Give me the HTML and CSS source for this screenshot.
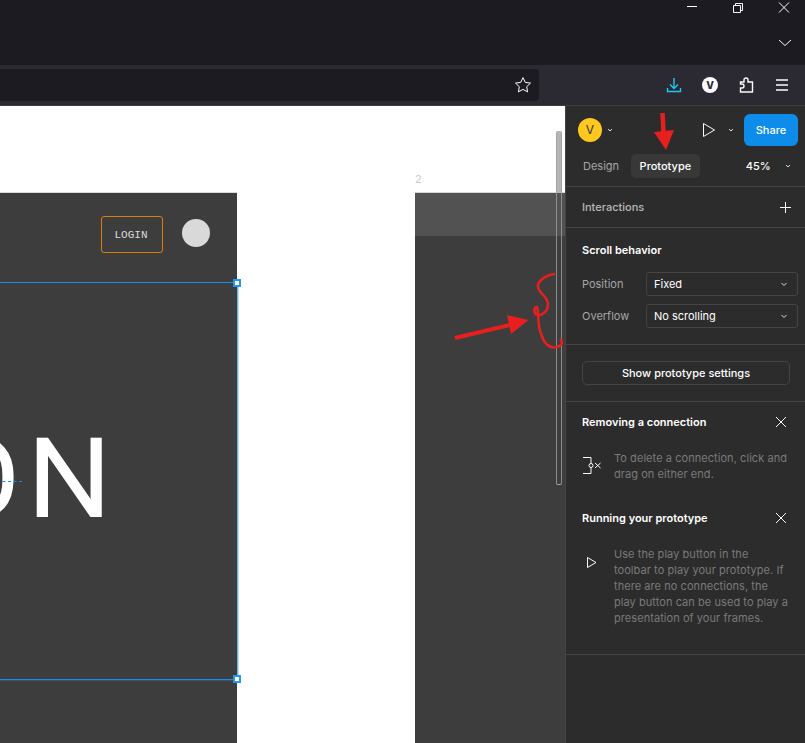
FILE: index.html
```html
<!DOCTYPE html>
<html lang="en">
<head>
    <meta charset="UTF-8">
    <title>Figma prototype panel</title>
    <link rel="stylesheet" href="styles.css">
</head>
<body>
    <div class="titlebar">
        <div class="window-buttons">
            <svg class="icon-win" viewBox="0 0 14 14"><path d="M1 4.500h10" /></svg>
            <svg class="icon-win" viewBox="0 0 14 14"><path d="M1.500 3.500h7v7h-7zM3.500 3.500v-2h7v7h-2" /></svg>
            <svg class="icon-win" viewBox="0 0 14 14"><path d="M1 .5l10 10M11 .5l-10 10" /></svg>
        </div>
        <svg class="tabs-chevron" viewBox="0 0 14 8"><path d="M1 1l6 5.500L13 1" /></svg>
    </div>

    <div class="toolbar">
        <div class="urlbar">
            <svg class="star" viewBox="0 0 18 18"><path d="M9 1.600l2.300 4.800 5.200.7-3.800 3.600.9 5.200L9 13.400l-4.600 2.500.9-5.200L1.500 7.100l5.200-.7z" /></svg>
        </div>
        <div class="tools">
            <svg class="tool" viewBox="0 0 16 16"><path class="cyan" d="M8 1v10M4 7.500l4 4 4-4M1.500 11v3.500h13V11" /></svg>
            <div class="profile">V</div>
            <svg class="tool" viewBox="0 0 16 16"><path d="M6 5V3a2 2 0 0 1 4 0v2h4.500v10h-12v-4H4a2 2 0 0 0 0-4H2.500V5z" /></svg>
            <svg class="tool" viewBox="0 0 16 16"><path d="M2 3h12M2 8h12M2 13h12" /></svg>
        </div>
    </div>

    <div class="workspace">
        <div class="canvas">
            <div class="frame frame-one">
                <div class="login">LOGIN</div>
                <div class="dot"></div>
                <div class="big-text">ON</div>
            </div>
            <div class="selection">
                <div class="guide"></div>
                <div class="handle handle-top"></div>
                <div class="handle handle-bottom"></div>
            </div>
            <div class="frame-label">2</div>
            <div class="frame frame-two">
                <div class="frame-head"></div>
            </div>
            <div class="scrollbar"></div>
        </div>

        <div class="panel">
            <div class="panel-top">
                <div class="avatar">V</div>
                <svg class="chev chev-avatar" viewBox="0 0 8 8"><path d="M2 3l2 2 2-2" /></svg>
                <svg class="play" viewBox="0 0 14 16"><path d="M1.500 1.500l11 6.500-11 6.500z" /></svg>
                <svg class="chev chev-play" viewBox="0 0 8 8"><path d="M2 3l2 2 2-2" /></svg>
                <div class="share">Share</div>
            </div>
            <div class="tabs">
                <span class="tab">Design</span>
                <span class="tab tab-active">Prototype</span>
                <span class="zoom">45%</span>
                <svg class="chev" viewBox="0 0 8 8"><path d="M2 3l2 2 2-2" /></svg>
            </div>

            <div class="section section-interactions">
                <span class="muted-title">Interactions</span>
                <svg class="plus" viewBox="0 0 11 11"><path d="M5.500 0v11M0 5.500h11" /></svg>
            </div>

            <div class="section section-scroll">
                <div class="title">Scroll behavior</div>
                <div class="field">
                    <span class="field-label">Position</span>
                    <div class="select">Fixed<svg class="chev" viewBox="0 0 8 8"><path d="M1.500 3l2.500 2.500L6.500 3" /></svg></div>
                </div>
                <div class="field">
                    <span class="field-label">Overflow</span>
                    <div class="select">No scrolling<svg class="chev" viewBox="0 0 8 8"><path d="M1.500 3l2.500 2.500L6.500 3" /></svg></div>
                </div>
            </div>

            <div class="section section-settings">
                <div class="settings-btn">Show prototype settings</div>
            </div>

            <div class="section section-help">
                <div class="help-head">
                    <span class="title">Removing a connection</span>
                    <svg class="close" viewBox="0 0 12 12"><path d="M1 1l10 10M11 1L1 11" /></svg>
                </div>
                <div class="help-body">
                    <svg class="help-icon" viewBox="0 0 20 20"><path d="M1 2.500h8v16H1" /><circle class="node" cx="9" cy="10.500" r="2" /><path d="M13 8l5.500 5M18.500 8L13 13" /></svg>
                    <p>To delete a connection, click and<br>drag on either end.</p>
                </div>
                <div class="help-head help-head-second">
                    <span class="title">Running your prototype</span>
                    <svg class="close" viewBox="0 0 12 12"><path d="M1 1l10 10M11 1L1 11" /></svg>
                </div>
                <div class="help-body">
                    <svg class="help-icon" viewBox="0 0 20 20"><path d="M5.500 6.500l8.500 5-8.500 5z" /></svg>
                    <p>Use the play button in the<br>toolbar to play your prototype. If<br>there are no connections, the<br>play button can be used to play a<br>presentation of your frames.</p>
                </div>
            </div>
        </div>
    </div>

    <!-- red annotations drawn on top of the screenshot -->
    <svg class="marks" viewBox="0 0 805 743">
        <path class="mark-line" d="M455 338L510 325" />
        <path class="mark-fill" d="M528.500 320L507 315 511 334z" />
        <path class="mark-line mark-line-thick" d="M662.500 113L663.500 132" />
        <path class="mark-fill" d="M654 132L674 130 666 150z" />
        <path class="mark-pen" d="M555 274C546 275 537 281 538 287C539 294 548 296 548 305C548 311 542 316 537 315C533 313 534 307 537 307C539 313 537 324 541 334C544 343 549 349 557 347C563 345 563 342 560 339" />
    </svg>
</body>
</html>
```

FILE: styles.css
```css
* {
    box-sizing: border-box;
}
html, body {
    margin: 0;
    height: 100%;
    overflow: hidden;
}
body {
    font-family: Inter, "Noto Sans", sans-serif;
    font-size: 11px;
    background: #fff;
    display: flex;
    flex-direction: column;
}
svg {
    display: block;
    fill: none;
    stroke: #fbfbfe;
}

/* browser chrome */
.titlebar {
    height: 65px;
    flex: none;
    background: #1c1b22;
    padding: 2px 13px 0 0;
    display: flex;
    flex-direction: column;
    align-items: flex-end;
}
.window-buttons {
    display: flex;
    gap: 32px;
}
.icon-win {
    width: 14px;
    height: 14px;
}
.tabs-chevron {
    width: 14px;
    height: 8px;
    margin-top: 23px;
}
.toolbar {
    height: 41px;
    flex: none;
    background: #2b2a33;
    display: flex;
    align-items: center;
    border-bottom: 1px solid #3c3c3c;
}
.urlbar {
    width: 539px;
    height: 32px;
    background: #1c1b22;
    border-radius: 0 4px 4px 0;
    display: flex;
    align-items: center;
    justify-content: flex-end;
    padding-right: 7px;
}
.star {
    width: 18px;
    height: 18px;
}
.tools {
    display: flex;
    align-items: center;
    margin-left: 127px;
    gap: 20px;
}
.tool {
    width: 16px;
    height: 16px;
    stroke-width: 1.4;
}
.cyan {
    stroke: #1dc9ee;
}
.profile {
    width: 16px;
    height: 16px;
    border-radius: 50%;
    background: #fbfbfe;
    color: #2b2a33;
    font-size: 10px;
    font-weight: 800;
    line-height: 16px;
    text-align: center;
}

.workspace {
    flex: 1;
    display: flex;
    min-height: 0;
}

/* free canvas */
.canvas {
    position: relative;
    width: 565px;
    flex: none;
    background: #fff;
    overflow: hidden;
}
.frame {
    position: absolute;
    top: 86px;
    bottom: 0;
    background: #3d3d3d;
    border-top: 1px solid #d9d9d9;
}
.frame-one {
    left: 0;
    width: 237px;
}
.frame-two {
    left: 415px;
    right: 0;
}
.frame-head {
    height: 43px;
    background: #525252;
}
.frame-label {
    position: absolute;
    left: 415px;
    top: 66px;
    color: #c9c9c9;
    font-size: 11px;
}
.login {
    position: absolute;
    left: 101px;
    top: 23px;
    width: 62px;
    height: 37px;
    padding-right: 2px;
    border: 1px solid #d97f0a;
    border-radius: 3px;
    color: #ddd;
    font-family: "Liberation Mono", monospace;
    font-size: 11px;
    line-height: 37px;
    text-align: center;
}
.dot {
    position: absolute;
    left: 182px;
    top: 26px;
    width: 28px;
    height: 28px;
    border-radius: 50%;
    background: #d9d9d9;
}
.big-text {
    position: absolute;
    right: 119px;
    top: 221px;
    color: #fff;
    font-family: Roboto, sans-serif;
    font-weight: 400;
    font-size: 112px;
    line-height: 130px;
    letter-spacing: 6px;
    white-space: nowrap;
    transform: scaleX(1.06);
    transform-origin: right;
}
.selection {
    position: absolute;
    left: -4px;
    top: 176px;
    width: 242px;
    height: 398px;
    border: 1px solid #1a8fe8;
    border-right-color: #6ab8f0;
    box-shadow: 1px 1px 0 rgba(26, 143, 232, 0.3);
}
.guide {
    position: absolute;
    left: 0;
    top: 198px;
    width: 25px;
    border-top: 1px dashed #0d8cf0;
}
.handle {
    position: absolute;
    right: -4px;
    width: 8px;
    height: 8px;
    background: #fff;
    border: 2px solid #2a96ea;
}
.handle-top {
    top: -4px;
}
.handle-bottom {
    bottom: -4px;
}
.scrollbar {
    position: absolute;
    left: 556px;
    top: 25px;
    width: 6px;
    height: 354px;
    background: linear-gradient(#b5b5b5 62px, transparent 62px);
    border: 1px solid rgba(160, 160, 160, 0.8);
    border-top: none;
    border-radius: 2px;
}

/* right panel */
.panel {
    width: 240px;
    flex: none;
    background: #2c2c2c;
    border-left: 1px solid #444;
    color: #fff;
}
.panel-top {
    height: 47px;
    display: flex;
    align-items: center;
    padding: 0 7px 0 12px;
}
.avatar {
    width: 24px;
    height: 24px;
    border-radius: 50%;
    background: #ffc71f;
    color: #333;
    font-size: 12px;
    line-height: 24px;
    text-align: center;
}
.chev {
    width: 8px;
    height: 8px;
    flex: none;
    stroke: #ddd;
}
.chev-avatar {
    margin-left: 4px;
}
.play {
    width: 14px;
    height: 16px;
    margin-left: 88px;
}
.chev-play {
    margin-left: 11px;
}
.share {
    width: 54px;
    height: 32px;
    margin-left: 9px;
    border-radius: 6px;
    background: #0d8ce9;
    font-weight: 500;
    line-height: 32px;
    text-align: center;
}
.tabs {
    height: 34px;
    display: flex;
    align-items: flex-start;
    padding: 1px 13px 0 9px;
    border-bottom: 1px solid #444;
}
.tab {
    height: 24px;
    padding: 0 8px;
    line-height: 24px;
    color: #a6a6a6;
}
.tab-active {
    margin-left: 4px;
    padding: 0 8.5px;
    border-radius: 5px;
    background: #383838;
    color: #fff;
    font-weight: 500;
}
.zoom {
    margin-left: 46px;
    line-height: 24px;
    font-weight: 500;
}
.tabs .chev {
    margin: 8px 0 0 auto;
}
.section {
    border-bottom: 1px solid #444;
    padding: 0 16px;
}
.section-interactions {
    height: 41px;
    display: flex;
    align-items: center;
    justify-content: space-between;
    padding-right: 14px;
}
.muted-title {
    color: #b8b8b8;
    font-weight: 500;
}
.plus {
    width: 11px;
    height: 11px;
}
.section-scroll {
    height: 117px;
    padding-top: 15px;
    padding-right: 7px;
}
.title {
    color: #fff;
    font-weight: 600;
    line-height: 14px;
}
.field {
    display: flex;
    align-items: center;
    height: 24px;
    margin-bottom: 8px;
}
.section-scroll .title {
    margin-bottom: 15px;
}
.field-label {
    width: 64px;
    color: #a6a6a6;
}
.select {
    width: 152px;
    height: 24px;
    border: 1px solid #444;
    border-radius: 3px;
    padding: 0 9px 0 7px;
    line-height: 22px;
    display: flex;
    align-items: center;
    justify-content: space-between;
}
.section-settings {
    height: 57px;
    padding-top: 16px;
}
.settings-btn {
    width: 208px;
    height: 24px;
    border: 1px solid #444;
    border-radius: 5px;
    line-height: 22px;
    text-align: center;
    font-weight: 500;
}
.section-help {
    height: 253px;
    padding-top: 13px;
}
.help-head {
    display: flex;
    align-items: center;
    justify-content: space-between;
    height: 14px;
}
.close {
    width: 12px;
    height: 12px;
    margin-right: 2px;
}
.help-body {
    display: flex;
    align-items: flex-start;
    margin-top: 21px;
}
.help-head-second {
    margin-top: 29px;
}
.help-icon {
    width: 20px;
    height: 20px;
    flex: none;
    margin: 5px 12px 0 0;
}
.node {
    fill: #2c2c2c;
}
.help-body p {
    margin: 0;
    line-height: 16px;
    letter-spacing: 0.06px;
    white-space: nowrap;
    color: #7a7a7a;
}

/* annotations */
.marks {
    position: absolute;
    left: 0;
    top: 0;
    width: 805px;
    height: 743px;
    stroke: none;
    pointer-events: none;
}
.mark-line {
    stroke: #e81f1f;
    stroke-width: 4;
}
.mark-line-thick {
    stroke-width: 4.500;
}
.mark-fill {
    fill: #e81f1f;
    stroke: none;
}
.mark-pen {
    stroke: #e81f1f;
    stroke-width: 2.500;
}
```
